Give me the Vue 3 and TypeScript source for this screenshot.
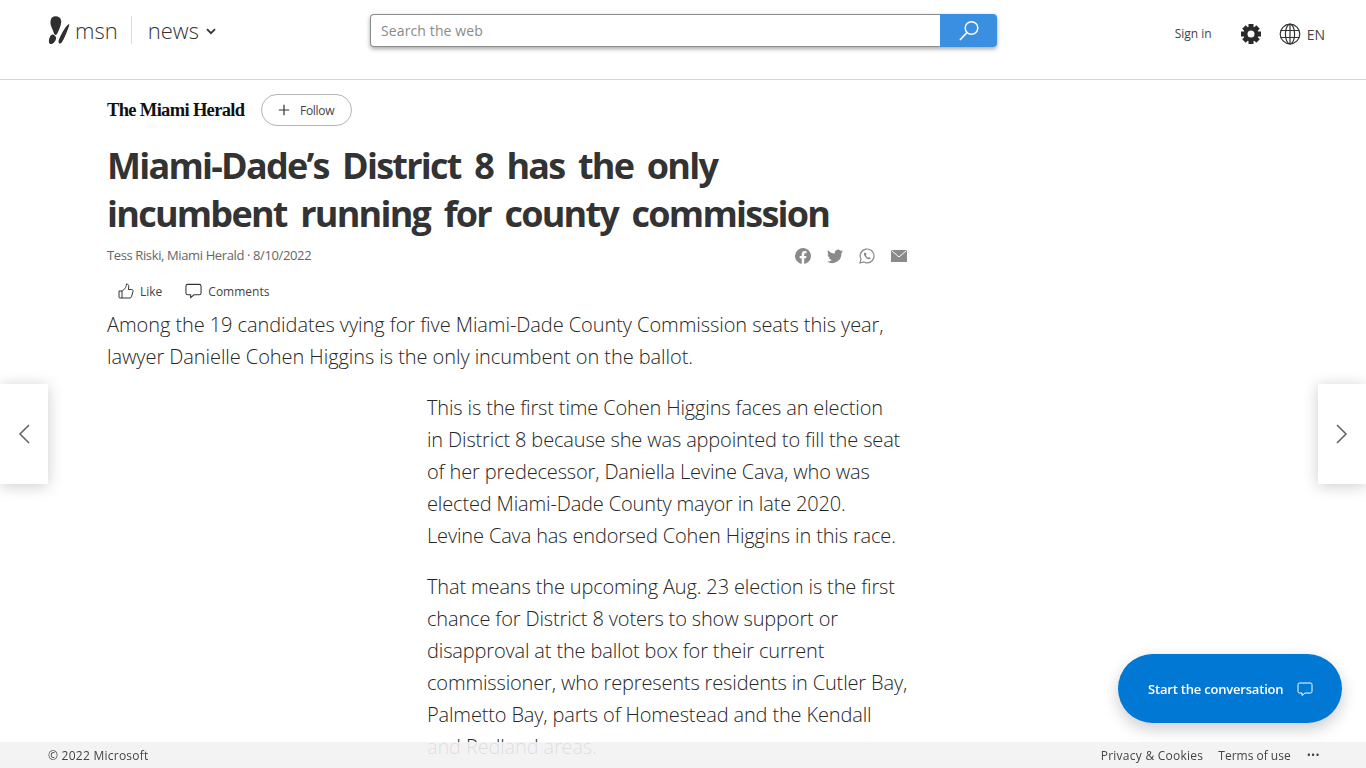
<script setup lang="ts">
const gearTeeth = [0, 45, 90, 135, 180, 225, 270, 315]

// line breaks kept as in the article column
const paragraphs: string[][] = [
  [
    'This is the first time Cohen Higgins faces an election',
    'in District 8 because she was appointed to fill the seat',
    'of her predecessor, Daniella Levine Cava, who was',
    'elected Miami-Dade County mayor in late 2020.',
    'Levine Cava has endorsed Cohen Higgins in this race.'
  ],
  [
    'That means the upcoming Aug. 23 election is the first',
    'chance for District 8 voters to show support or',
    'disapproval at the ballot box for their current',
    'commissioner, who represents residents in Cutler Bay,',
    'Palmetto Bay, parts of Homestead and the Kendall',
    'and Redland areas.'
  ]
]
</script>

<template>
  <div class="page">
    <header class="topbar">
      <div class="brand">
        <svg class="butterfly" viewBox="0 0 22 29" width="22" height="29">
          <path d="M4 1.500C7-.5 12 0 13 4c1 4-2 10-4 14-1 1.500-2.500 1-3-.5C5 13 2 10 2.500 6c.2-2 .5-3.500 1.500-4.500z" fill="#2f2f2f" />
          <path d="M5 18.500c2 .5 3.500 2.500 3 4.500-.8 3-3.500 5.500-5.500 5-2-.5-1.800-4-1-6 .8-2.500 2-4 3.500-3.500z" fill="#2f2f2f" />
          <path d="M21 8c.5.2.3 1 0 2-2 6-4.500 12-7 16-1 1.500-2.500 2-3.200 1-.8-1.500.2-4 1.700-7 2-4 5-9.500 8.500-12z" fill="#2f2f2f" />
        </svg>
        <span class="msn">msn</span>
        <span class="divider"></span>
        <span class="news">news</span>
        <svg class="chevron" viewBox="0 0 10 7" width="10" height="7">
          <path d="M1 1.200l4 4 4-4" fill="none" stroke="#333" stroke-width="1.800" />
        </svg>
      </div>

      <form class="search" @submit.prevent>
        <input class="search-input" type="text" placeholder="Search the web" />
        <button class="search-btn" type="button" aria-label="Search">
          <svg viewBox="0 0 24 24" width="24" height="24">
            <circle cx="14.500" cy="9" r="6.300" fill="none" stroke="#fff" stroke-width="1.500" />
            <path d="M10 13.500L3 21" fill="none" stroke="#fff" stroke-width="1.700" />
          </svg>
        </button>
      </form>

      <div class="account">
        <span class="signin">Sign in</span>
        <svg class="gear" viewBox="0 0 22 22" width="22" height="22">
          <rect
            v-for="a in gearTeeth"
            :key="a"
            x="8.500"
            y="1"
            width="5"
            height="5"
            fill="#2b2b2b"
            :transform="`rotate(${a} 11 11)`"
          />
          <circle cx="11" cy="11" r="5.500" fill="none" stroke="#2b2b2b" stroke-width="4" />
        </svg>
        <svg class="globe" viewBox="0 0 22 22" width="22" height="22" fill="none" stroke="#333" stroke-width="1.200">
          <circle cx="11" cy="11" r="9.800" />
          <ellipse cx="11" cy="11" rx="4.600" ry="9.800" />
          <path d="M11 1.200v19.600M1.800 7.500h18.400M1.800 14.500h18.400" />
        </svg>
        <span class="lang">EN</span>
      </div>
    </header>

    <main class="article">
      <div class="source">
        <span class="publisher">The Miami Herald</span>
        <button class="follow" type="button">
          <svg viewBox="0 0 12 12" width="12" height="12">
            <path d="M6 .8v10.400M.8 6h10.400" stroke="#333" stroke-width="1.200" fill="none" />
          </svg>
          <span>Follow</span>
        </button>
      </div>

      <h1 class="headline">Miami-Dade’s District 8 has the only<br />incumbent running for county commission</h1>

      <div class="byline-row">
        <span class="byline">Tess Riski, Miami Herald · 8/10/2022</span>
        <div class="share">
          <svg viewBox="0 0 16 16" width="16" height="16">
            <path d="M16 8a8 8 0 1 0-9.300 7.900v-5.600h-2V8h2V6.200c0-2 1.200-3.100 3-3.100.9 0 1.800.2 1.800.2v2h-1c-1 0-1.300.6-1.300 1.200V8h2.200l-.4 2.300H9.200v5.600A8 8 0 0 0 16 8z" fill="#8a8a8a" />
          </svg>
          <svg viewBox="0 0 16 16" width="16" height="16">
            <path d="M16 3.200c-.6.300-1.200.4-1.900.5.700-.4 1.200-1 1.400-1.800-.6.400-1.300.6-2.100.8a3.300 3.300 0 0 0-5.600 3C5.100 5.600 2.700 4.300 1.100 2.300c-.9 1.500-.4 3.400 1 4.400-.5 0-1-.2-1.500-.4 0 1.600 1.100 3 2.600 3.300-.5.100-1 .1-1.500 0 .4 1.300 1.600 2.200 3.100 2.300A6.600 6.600 0 0 1 0 13.500 9.300 9.300 0 0 0 14.400 5.200c.6-.5 1.200-1.200 1.600-2z" fill="#8a8a8a" />
          </svg>
          <svg viewBox="0 0 16 16" width="16" height="16" fill="none">
            <path d="M1 15l1-3.800A6.900 6.900 0 1 1 4.800 14z" stroke="#8a8a8a" stroke-width="1.200" />
            <path d="M5.600 4.500c-.9.700-.9 2 0 3.500 1 1.700 2.500 3 4.200 3.300 1 .2 1.800-.5 1.900-1.300l-1.700-1-.8.800c-1-.4-1.900-1.300-2.300-2.300l.7-.9-.9-1.900z" fill="#8a8a8a" />
          </svg>
          <svg viewBox="0 0 16 12" width="16" height="12">
            <rect width="16" height="12" fill="#8a8a8a" />
            <path d="M.5.500L8 7l7.500-6.500" fill="none" stroke="#fff" stroke-width="1" />
          </svg>
        </div>
      </div>

      <div class="reactions">
        <span class="reaction">
          <svg viewBox="0 0 16 16" width="16" height="16" fill="none" stroke="#333" stroke-width="1">
            <path d="M1 8h3v7H1.800a.8.800 0 0 1-.8-.8zM4 8.500l3-3.200c.9-1 1.300-2.300 1.500-4.300 1.600 0 2.300 1.100 2.200 2.600L10.400 6.500h3.200c1 0 1.700.9 1.400 1.900l-1.500 5.400c-.2.700-.8 1.200-1.500 1.200H4" />
          </svg>
          Like
        </span>
        <span class="reaction">
          <svg viewBox="0 0 18 16" width="17" height="16" fill="none" stroke="#333" stroke-width="1.100">
            <path d="M3 1h12a2 2 0 0 1 2 2v7a2 2 0 0 1-2 2H9.500L6 15v-3H3a2 2 0 0 1-2-2V3a2 2 0 0 1 2-2z" />
          </svg>
          Comments
        </span>
      </div>

      <p class="lead">Among the 19 candidates vying for five Miami-Dade County Commission seats this year,<br />lawyer Danielle Cohen Higgins is the only incumbent on the ballot.</p>

      <div class="body-text">
        <p v-for="(lines, i) in paragraphs" :key="i">
          <span v-for="line in lines" :key="line" class="line">{{ line }}</span>
        </p>
      </div>
    </main>

    <button class="flipper prev" type="button" aria-label="Previous">
      <svg viewBox="0 0 12 20" width="12" height="20">
        <path d="M11 1L2 10l9 9" fill="none" stroke="#666" stroke-width="1.600" />
      </svg>
    </button>
    <button class="flipper next" type="button" aria-label="Next">
      <svg viewBox="0 0 12 20" width="12" height="20">
        <path d="M1 1l9 9-9 9" fill="none" stroke="#666" stroke-width="1.600" />
      </svg>
    </button>

    <button class="chat" type="button">
      <span>Start the conversation</span>
      <svg viewBox="0 0 16 16" width="16" height="16" fill="none" stroke="#fff" stroke-width="1">
        <path d="M2.500 2h11A1.500 1.500 0 0 1 15 3.500v7a1.500 1.500 0 0 1-1.500 1.500H8l-3 2.500V12H2.500A1.500 1.500 0 0 1 1 10.500v-7A1.500 1.500 0 0 1 2.500 2z" />
      </svg>
    </button>

    <footer class="footer">
      <span class="copy">© 2022 Microsoft</span>
      <nav class="footer-links">
        <span class="copy">Privacy &amp; Cookies</span>
        <span>Terms of use</span>
        <span class="more">•••</span>
      </nav>
    </footer>
  </div>
</template>

<style>
html,
body {
  margin: 0;
  height: 100%;
  overflow: hidden;
  background: #fff;
}
</style>

<style scoped>
.page {
  height: 768px;
  overflow: hidden;
  font-family: "Open Sans", "Noto Sans", "Liberation Sans", sans-serif;
  color: #333;
}

.topbar {
  display: flex;
  align-items: flex-start;
  height: 79px;
  padding: 0 41px 0 48px;
  border-bottom: 1px solid #d4d4d4;
}

.brand {
  display: flex;
  align-items: center;
  width: 322px;
  height: 60px;
  flex-shrink: 0;
}

.butterfly {
  margin-right: 5px;
}

.msn,
.news {
  font-size: 22px;
  font-weight: 300;
  color: #333;
}

.divider {
  width: 1px;
  height: 28px;
  margin: 0 16px 0 13px;
  background: #ddd;
}

.chevron {
  margin: 2px 0 0 7px;
}

.search {
  display: flex;
  width: 627px;
  height: 33px;
  margin-top: 14px;
  border-radius: 4px;
  box-shadow: 0 2px 4px rgba(0, 0, 0, 0.35);
  flex-shrink: 0;
}

.search-input {
  flex: 1;
  min-width: 0;
  box-sizing: border-box;
  padding: 0 10px;
  border: 1px solid #8c8c8c;
  border-right: none;
  border-radius: 4px 0 0 4px;
  outline: none;
  font: 14px "Open Sans", sans-serif;
  letter-spacing: 0.12px;
  color: #333;
}

.search-input::placeholder {
  color: #8a8a8a;
  opacity: 1;
}

.search-btn {
  display: flex;
  align-items: center;
  justify-content: center;
  width: 57px;
  padding: 0;
  border: none;
  border-radius: 0 4px 4px 0;
  background: #3a8fe0;
}

.account {
  display: flex;
  align-items: center;
  height: 68px;
  margin-left: auto;
}

.signin {
  margin: 0 28px 2px 0;
  font-size: 12px;
  color: #444;
}

.gear {
  margin-right: 17px;
}

.lang {
  margin-left: 6px;
  font-size: 14px;
  color: #444;
}

.article {
  width: 800px;
  margin-left: 107px;
}

.source {
  display: flex;
  align-items: center;
  height: 32px;
  margin-top: 14px;
}

.publisher {
  width: 154px;
  font-family: "Liberation Serif", serif;
  font-size: 18.5px;
  font-weight: 700;
  white-space: nowrap;
  color: #111;
  letter-spacing: -0.66px;
}

.follow {
  display: flex;
  align-items: center;
  gap: 10px;
  box-sizing: border-box;
  width: 91px;
  height: 32px;
  padding: 0 0 0 16px;
  border: 1px solid #b5b5b5;
  border-radius: 16px;
  background: #fff;
  font: 12px "Open Sans", sans-serif;
  letter-spacing: -0.3px;
  color: #444;
}

.headline {
  margin: 16px 0 0;
  font-size: 36px;
  line-height: 48px;
  font-weight: 700;
  color: #333;
  letter-spacing: -1.76px;
  word-spacing: 5.9px;
  white-space: nowrap;
}

.byline-row {
  display: flex;
  align-items: center;
  justify-content: space-between;
  height: 20px;
  margin-top: 7px;
}

.byline {
  font-size: 13px;
  color: #666;
  letter-spacing: -0.38px;
}

.share {
  display: flex;
  align-items: center;
  gap: 16px;
  margin-top: 2px;
}

.reactions {
  display: flex;
  align-items: center;
  gap: 23px;
  height: 20px;
  margin: 16px 0 0 11px;
}

.reaction {
  display: flex;
  align-items: center;
  gap: 6px;
  font-size: 12px;
  color: #444;
}

.lead {
  margin: 8px 0 0;
  font-size: 20px;
  font-weight: 300;
  line-height: 32px;
  letter-spacing: -0.07px;
  white-space: nowrap;
  color: #262626;
}

.body-text {
  margin: 19px 0 0 320px;
  font-size: 20px;
  font-weight: 300;
  line-height: 32px;
  letter-spacing: -0.15px;
  color: #262626;
}

.body-text p {
  margin: 0 0 19px;
}

.line {
  display: block;
  white-space: nowrap;
}

.flipper {
  position: fixed;
  top: 384px;
  display: flex;
  align-items: center;
  justify-content: center;
  width: 48px;
  height: 100px;
  padding: 0;
  border: none;
  background: #fff;
  box-shadow: 0 2px 16px rgba(0, 0, 0, 0.2);
}

.prev {
  left: 0;
}

.next {
  right: 0;
}

.chat {
  position: fixed;
  right: 24px;
  bottom: 45px;
  display: flex;
  align-items: center;
  gap: 14px;
  box-sizing: border-box;
  width: 224px;
  height: 69px;
  padding: 0 0 0 30px;
  border: none;
  border-radius: 35px;
  background: #0078d4;
  box-shadow: 0 6px 16px rgba(0, 0, 0, 0.2);
  font: 600 13px "Open Sans", sans-serif;
  color: #fff;
  white-space: nowrap;
  letter-spacing: -0.2px;
}

.footer {
  position: fixed;
  left: 0;
  right: 0;
  bottom: 0;
  display: flex;
  align-items: center;
  justify-content: space-between;
  box-sizing: border-box;
  height: 26px;
  padding: 0 46px 0 48px;
  background: rgba(242, 242, 242, 0.9);
  font-size: 12px;
  color: #444;
}

.copy {
  letter-spacing: 0.25px;
}

.footer-links {
  display: flex;
  align-items: center;
  gap: 15px;
}

.more {
  margin-left: 1px;
  font-size: 11px;
  letter-spacing: 0.3px;
  line-height: 16px;
}
</style>
